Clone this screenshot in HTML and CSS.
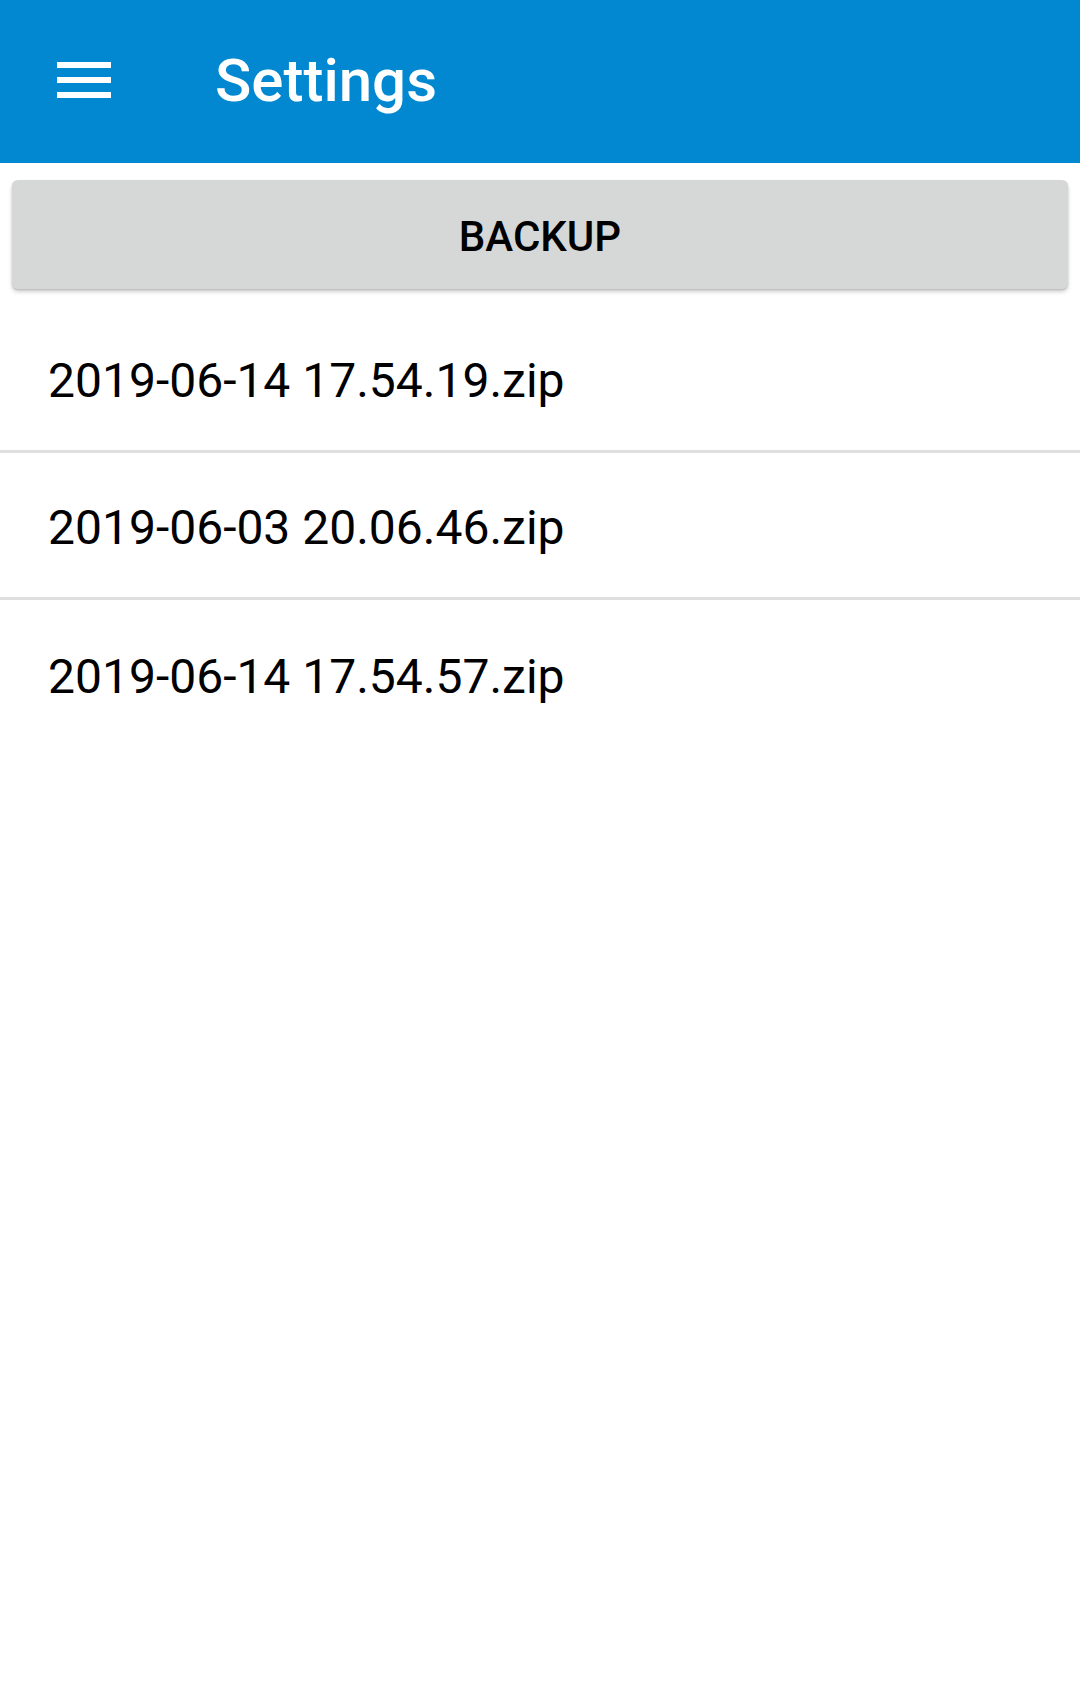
FILE: index.html
```html
<!DOCTYPE html>
<html>
<head>
<meta charset="utf-8">
<link rel="stylesheet" href="styles.css">
</head>
<body>
<header class="toolbar">
  <svg class="menu-icon" width="54" height="36" viewBox="0 0 54 36">
    <rect x="0" y="0" width="54" height="6" fill="#fff"/>
    <rect x="0" y="15" width="54" height="6" fill="#fff"/>
    <rect x="0" y="30" width="54" height="6" fill="#fff"/>
  </svg>
  <h1 class="title">Settings</h1>
</header>
<main class="content">
  <div class="button-wrap">
    <button class="backup-btn">BACKUP</button>
  </div>
  <ul class="file-list">
    <li class="file-item">2019-06-14 17.54.19.zip</li>
    <li class="file-item">2019-06-03 20.06.46.zip</li>
    <li class="file-item">2019-06-14 17.54.57.zip</li>
  </ul>
</main>
</body>
</html>
```
FILE: styles.css
```css
html, body {
  margin: 0;
  padding: 0;
  background: #ffffff;
}
body {
  width: 1080px;
  height: 1699px;
  font-family: Roboto, "Noto Sans", "Liberation Sans", sans-serif;
  overflow: hidden;
}
.toolbar {
  height: 163px;
  background: #0288D1;
  display: flex;
  align-items: center;
  padding-left: 57px;
  box-sizing: border-box;
}
.menu-icon {
  display: block;
  flex: none;
  margin-top: -4px;
}
.title {
  margin: 0 0 0 104px;
  color: #ffffff;
  font-size: 60px;
  font-weight: 500;
  line-height: 1;
  margin-top: -2px;
}
.content {
  display: flex;
  flex-direction: column;
}
.button-wrap {
  padding: 17px 12px;
}
.backup-btn {
  display: block;
  width: 100%;
  height: 109px;
  border: none;
  border-radius: 6px;
  background: #D6D7D7;
  color: #000000;
  font-family: Roboto, "Noto Sans", "Liberation Sans", sans-serif;
  font-size: 42px;
  font-weight: 500;
  padding: 3px 0 0 0;
  box-shadow: 0 3px 4px rgba(0, 0, 0, 0.18), 0 1px 2px rgba(0, 0, 0, 0.14);
}
.file-list {
  list-style: none;
  margin: 0;
  padding: 0;
}
.file-item {
  height: 147px;
  display: flex;
  align-items: center;
  padding-left: 48px;
  padding-top: 5px;
  box-sizing: border-box;
  font-size: 48px;
  color: #000000;
  border-bottom: 3px solid #DFDFDF;
}
.file-item:last-child {
  border-bottom: none;
}
```
